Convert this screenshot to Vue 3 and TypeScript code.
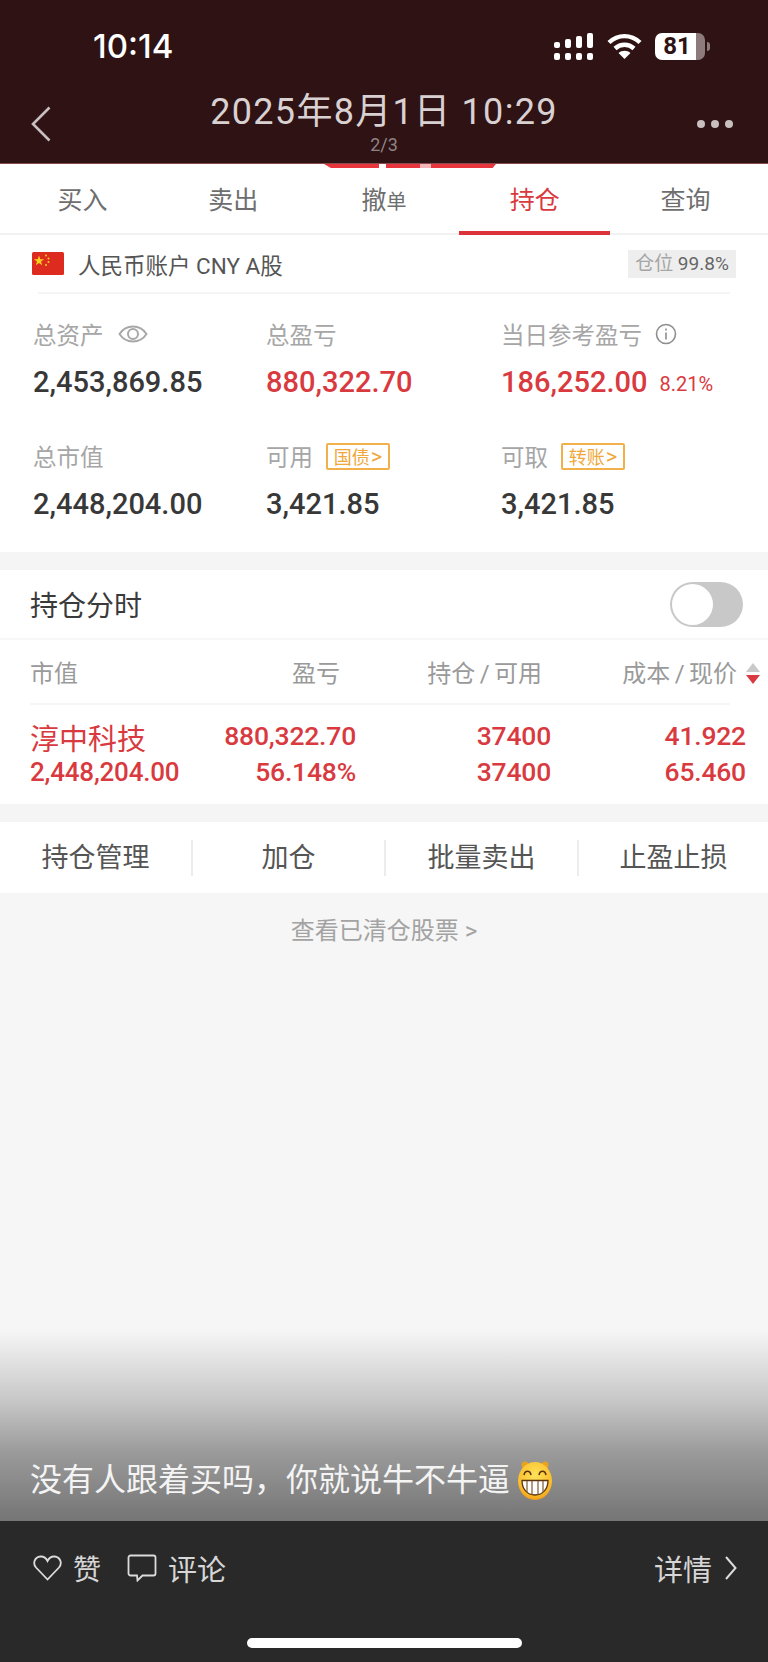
<script setup lang="ts">
import { ref } from 'vue'

const activeTab = ref('持仓')
const tabs = ['买入', '卖出', '撤单', '持仓', '查询']
const actions = ['持仓管理', '加仓', '批量卖出', '止盈止损']

const holding = {
  name: '淳中科技',
  marketValue: '2,448,204.00',
  profit: '880,322.70',
  profitRate: '56.148%',
  shares: '37400',
  available: '37400',
  cost: '41.922',
  price: '65.460',
}
</script>

<template>
  <div class="page">
    <header class="top">
      <div class="status">
        <span class="clock">10:14</span>
        <div class="status-icons">
          <svg class="signal" width="40" height="27" viewBox="0 0 40 27" fill="#fff">
            <rect x="0" y="9" width="6" height="6" rx="2" />
            <rect x="11" y="6" width="6" height="9" rx="2" />
            <rect x="22" y="3" width="6" height="12" rx="2" />
            <rect x="33" y="0" width="6" height="15" rx="2" />
            <rect x="0" y="20" width="6" height="7" rx="2" />
            <rect x="11" y="20" width="6" height="7" rx="2" />
            <rect x="22" y="20" width="6" height="7" rx="2" />
            <rect x="33" y="20" width="6" height="7" rx="2" />
          </svg>
          <svg class="wifi" width="35" height="26" viewBox="0 0 35 26" fill="none" stroke="#fff" stroke-width="4.4">
            <path d="M2 9.5C11 1 24 1 33 9.5" />
            <path d="M8 15.5C13.500 10.500 21.500 10.500 27 15.500" />
            <path d="M17.500 26L11.500 20C15 17 20 17 23.500 20Z" fill="#fff" stroke="none" />
          </svg>
          <div class="battery">
            <div class="battery-body"><span>81</span></div>
            <i class="battery-cap"></i>
          </div>
        </div>
      </div>
      <div class="nav">
        <svg class="back" width="20" height="36" viewBox="0 0 20 36" fill="none" stroke="#c9bfc0" stroke-width="2.6">
          <path d="M18.500 1.500L2 18L18.500 34.500" />
        </svg>
        <div class="nav-title">
          <div class="date">2025年8月1日 10:29</div>
          <div class="pager">2/3</div>
        </div>
        <div class="more"><i></i><i></i><i></i></div>
      </div>
    </header>

    <div class="peek"><div class="peek-bar"></div></div>

    <nav class="tabs">
      <div v-for="tab in tabs" :key="tab" class="tab" :class="{ active: tab === activeTab }">
        <template v-if="tab === '撤单'">撤<small>单</small></template>
        <template v-else>{{ tab }}</template>
      </div>
    </nav>

    <section class="account">
      <div class="account-row">
        <svg class="flag" width="32" height="23" viewBox="0 0 32 23">
          <rect width="32" height="23" rx="1.500" fill="#de2b20" />
          <polygon points="7,3.500 8.300,7.300 12.200,7.300 9,9.600 10.200,13.300 7,11 3.800,13.300 5,9.600 1.800,7.300 5.700,7.300" fill="#f6d21f" />
          <circle cx="14" cy="3.500" r="1" fill="#f6d21f" />
          <circle cx="16.500" cy="6.500" r="1" fill="#f6d21f" />
          <circle cx="16.500" cy="10" r="1" fill="#f6d21f" />
          <circle cx="14" cy="13" r="1" fill="#f6d21f" />
        </svg>
        <span class="account-name">人民币账户 CNY A股</span>
        <span class="ratio"><em>仓位</em> 99.8%</span>
      </div>

      <div class="stats">
        <div class="stat">
          <div class="stat-label">
            总资产
            <svg class="eye" width="30" height="22" viewBox="0 0 30 22" fill="none" stroke="#a8a8a8" stroke-width="2">
              <path d="M1.500 11C8 1 22 1 28.500 11C22 21 8 21 1.500 11Z" />
              <circle cx="15" cy="11" r="5" />
            </svg>
          </div>
          <div class="stat-value">2,453,869.85</div>
        </div>
        <div class="stat">
          <div class="stat-label">总盈亏</div>
          <div class="stat-value up">880,322.70</div>
        </div>
        <div class="stat">
          <div class="stat-label">
            当日参考盈亏
            <svg class="info" width="22" height="22" viewBox="0 0 22 22" fill="none" stroke="#8e8e8e" stroke-width="1.600">
              <circle cx="11" cy="11" r="9.500" />
              <path d="M11 9.500V16.500" />
              <path d="M11 5.500V7.500" />
            </svg>
          </div>
          <div class="stat-value up">186,252.00<span class="rate">8.21%</span></div>
        </div>
        <div class="stat">
          <div class="stat-label">总市值</div>
          <div class="stat-value">2,448,204.00</div>
        </div>
        <div class="stat">
          <div class="stat-label">可用<span class="link-tag">国债<b>&gt;</b></span></div>
          <div class="stat-value">3,421.85</div>
        </div>
        <div class="stat">
          <div class="stat-label">可取<span class="link-tag">转账<b>&gt;</b></span></div>
          <div class="stat-value">3,421.85</div>
        </div>
      </div>
    </section>

    <section class="positions">
      <div class="switch-row">
        <span>持仓分时</span>
        <div class="switch"><i></i></div>
      </div>
      <div class="table-head">
        <span class="col-a">市值</span>
        <span class="col-b">盈亏</span>
        <span class="col-c">持仓 / 可用</span>
        <span class="col-d">成本 / 现价</span>
        <div class="sort"><i class="sort-up"></i><i class="sort-down"></i></div>
      </div>
      <div class="table-row">
        <div class="col-a">
          <div class="stock-name">{{ holding.name }}</div>
          <div>{{ holding.marketValue }}</div>
        </div>
        <div class="col-b">
          <div>{{ holding.profit }}</div>
          <div>{{ holding.profitRate }}</div>
        </div>
        <div class="col-c">
          <div>{{ holding.shares }}</div>
          <div>{{ holding.available }}</div>
        </div>
        <div class="col-d">
          <div>{{ holding.cost }}</div>
          <div>{{ holding.price }}</div>
        </div>
      </div>
    </section>

    <section class="actions">
      <div v-for="item in actions" :key="item" class="action">{{ item }}</div>
    </section>

    <main class="rest">
      <div class="cleared">查看已清仓股票 &gt;</div>
      <div class="caption">
        <span>没有人跟着买吗，你就说牛不牛逼</span>
        <svg class="emoji" width="38" height="40" viewBox="0 0 38 40">
          <defs>
            <radialGradient id="face" cx="50%" cy="35%" r="70%">
              <stop offset="0%" stop-color="#ffe25a" />
              <stop offset="70%" stop-color="#fbc02d" />
              <stop offset="100%" stop-color="#ee9412" />
            </radialGradient>
          </defs>
          <circle cx="9" cy="5" r="3.500" fill="#e9a21c" />
          <circle cx="29" cy="5" r="3.500" fill="#e9a21c" />
          <ellipse cx="19" cy="21" rx="17" ry="19" fill="url(#face)" />
          <path d="M8 15C9 10 14 10 15 15M23 15C24 10 29 10 30 15" fill="none" stroke="#5b3410" stroke-width="1.600" />
          <path d="M6 20.500H32C32 29 27 35 19 35C11 35 6 29 6 20.500Z" fill="#fff" stroke="#5b3410" stroke-width="1.300" />
          <path d="M11 21V32M16 21V35M22 21V35M27 21V32" stroke="#7b5a30" stroke-width="1.200" />
        </svg>
      </div>
    </main>

    <footer class="bottom">
      <div class="bottom-row">
        <svg class="heart" width="29" height="26" viewBox="0 0 29 26" fill="none" stroke="#dcdcdc" stroke-width="1.800">
          <path d="M14.500 24.500L3 12.500C-0.500 8.500 1.500 2 7.500 1.500C10.500 1.300 13 3 14.500 6C16 3 18.500 1.300 21.500 1.500C27.500 2 29.500 8.500 26 12.500Z" />
        </svg>
        <span class="like">赞</span>
        <svg class="comment" width="30" height="28" viewBox="0 0 30 28" fill="none" stroke="#dcdcdc" stroke-width="1.800">
          <path d="M3.500 1.500H26.500C27.600 1.500 28.500 2.400 28.500 3.500V19.500C28.500 20.600 27.600 21.500 26.500 21.500H15.500L10.500 26.500L10 21.500H3.500C2.400 21.500 1.500 20.600 1.500 19.500V3.500C1.500 2.400 2.400 1.500 3.500 1.500Z" />
        </svg>
        <span>评论</span>
        <span class="detail">详情</span>
        <svg width="13" height="26" viewBox="0 0 13 26" fill="none" stroke="#dcdcdc" stroke-width="2">
          <path d="M2 2L11.500 13L2 24" />
        </svg>
      </div>
      <div class="home-bar"></div>
    </footer>
  </div>
</template>

<style>
html,
body {
  margin: 0;
  background: #f5f5f5;
}
</style>

<style scoped>
.page {
  width: 768px;
  height: 1662px;
  display: flex;
  flex-direction: column;
  overflow: hidden;
  background: #f5f5f5;
  font-family: Roboto, "Noto Sans CJK SC", sans-serif;
  color: #333;
}

/* 顶部深色区域 */
.top {
  height: 164px;
  flex: none;
  box-sizing: border-box;
  background: #2e1214;
  color: #fff;
  border-bottom: 1px solid #8a4a4c;
}

.status {
  height: 92px;
  display: flex;
  align-items: center;
  justify-content: space-between;
  padding: 0 58px 0 93px;
}

.clock {
  font-size: 33px;
  font-weight: 500;
  font-family: Inter, Roboto, sans-serif;
}

.status-icons {
  display: flex;
  align-items: center;
  gap: 13px;
}

.battery {
  display: flex;
  align-items: center;
  gap: 2px;
}

.battery-body {
  width: 50px;
  height: 27px;
  border-radius: 7px;
  overflow: hidden;
  background: linear-gradient(90deg, #fff 82%, #8d7a7b 82%);
  color: #2e1214;
  font-size: 24px;
  font-weight: 700;
  line-height: 27px;
  text-align: center;
  padding-right: 6px;
  box-sizing: border-box;
}

.battery-cap {
  width: 3px;
  height: 9px;
  border-radius: 0 3px 3px 0;
  background: #8d7a7b;
}

.nav {
  height: 71px;
  position: relative;
  display: flex;
  justify-content: center;
  align-items: flex-start;
}

.back {
  position: absolute;
  left: 31px;
  top: 14px;
}

.nav-title {
  text-align: center;
}

.date {
  font-size: 36px;
  line-height: 40px;
  letter-spacing: 1.3px;
  color: #d9d1d1;
}

.pager {
  font-size: 18px;
  line-height: 22px;
  margin-top: 2px;
  color: #8f8586;
}

.more {
  position: absolute;
  right: 35px;
  top: 28px;
  display: flex;
  gap: 6px;
}

.more i {
  width: 8px;
  height: 8px;
  border-radius: 50%;
  background: #c9bfc0;
}

/* 上一张页面露出的一点红条 */
.peek {
  height: 4px;
  flex: none;
  background: #fff;
  display: flex;
  justify-content: center;
}

.peek-bar {
  width: 172px;
  height: 4px;
  margin-left: 52px;
  background: linear-gradient(
    90deg,
    #e8343c 0,
    #e8343c 32%,
    #fff 32%,
    #fff 36%,
    #e8343c 36%,
    #e8343c 56%,
    #f5b5b8 56%,
    #f5b5b8 62%,
    #e8343c 62%
  );
  clip-path: polygon(0 0, 100% 0, 98% 100%, 4% 100%);
}

.tabs {
  height: 67px;
  flex: none;
  display: flex;
  padding: 0 7px;
  background: #fff;
  border-bottom: 2px solid #f1f1f1;
  box-sizing: border-box;
}

.tab {
  flex: 1;
  text-align: center;
  font-size: 25px;
  line-height: 65px;
  color: #6e6e6e;
  position: relative;
}

.tab small {
  font-size: 20px;
}

.tab.active {
  color: #d93a40;
}

.tab.active::after {
  content: '';
  position: absolute;
  left: 0;
  right: 0;
  bottom: -2px;
  height: 4px;
  background: #dc3239;
}

.account {
  flex: none;
  height: 317px;
  box-sizing: border-box;
  background: #fff;
}

.account-row {
  height: 59px;
  margin: 0 38px;
  display: flex;
  align-items: center;
  border-bottom: 2px solid #f5f5f5;
  box-sizing: border-box;
}

.flag {
  margin-left: -6px;
  margin-right: 14px;
}

.account-name {
  font-size: 22.5px;
  color: #555;
}

.ratio {
  margin-left: auto;
  margin-right: -6px;
  width: 108px;
  height: 28px;
  background: #eeeeee;
  font-size: 19px;
  line-height: 28px;
  color: #666;
  text-align: center;
}

.ratio em {
  font-style: normal;
  color: #a5a5a5;
}

.stats {
  display: grid;
  grid-template-columns: 233px 235px 1fr;
  grid-template-rows: 122px 122px;
  padding: 24px 0 0 33px;
}

.stat-label {
  height: 32px;
  display: flex;
  align-items: center;
  font-size: 23.5px;
  color: #a6a6a6;
  white-space: nowrap;
}

.eye {
  margin-left: 14px;
}

.info {
  margin-left: 13px;
}

.stat-value {
  margin-top: 14px;
  font-size: 29px;
  font-weight: 500;
  line-height: 36px;
  color: #383838;
  white-space: nowrap;
}

.stat-value.up {
  color: #d93a40;
}

.rate {
  font-size: 20px;
  margin-left: 12px;
  font-weight: 400;
  position: relative;
  top: -1px;
}

.link-tag {
  margin-left: 13px;
  height: 27px;
  width: 64px;
  box-sizing: border-box;
  border: 2px solid #f2b04a;
  border-radius: 2px;
  display: flex;
  align-items: center;
  justify-content: center;
  font-size: 18px;
  color: #f0a83a;
}

.link-tag b {
  font-weight: 400;
  font-size: 22px;
  margin-left: 1px;
}

.positions {
  margin-top: 18px;
  flex: none;
  height: 234px;
  background: #fff;
}

.switch-row {
  height: 70px;
  box-sizing: border-box;
  padding: 0 25px 0 30px;
  display: flex;
  align-items: center;
  justify-content: space-between;
  font-size: 28px;
  color: #3a3a3a;
  border-bottom: 2px solid #f8f8f8;
}

.switch {
  width: 73px;
  height: 45px;
  border-radius: 23px;
  background: #c8c8c8;
  position: relative;
}

.switch i {
  position: absolute;
  left: 2px;
  top: 2px;
  width: 41px;
  height: 41px;
  border-radius: 50%;
  background: #fff;
}

.table-head,
.table-row {
  display: grid;
  grid-template-columns: 180px 146px 195px 195px;
  margin-left: 30px;
  position: relative;
}

.table-head {
  height: 65px;
  width: 700px;
  align-items: center;
  font-size: 24px;
  word-spacing: -1.5px;
  color: #9a9a9a;
  border-bottom: 2px solid #f6f6f6;
  box-sizing: border-box;
  white-space: nowrap;
}

.table-head .col-b {
  padding-right: 16px;
}

.table-head .col-c,
.table-head .col-d {
  padding-right: 9px;
}

.col-b,
.col-c,
.col-d {
  text-align: right;
}

.sort {
  position: absolute;
  left: 716px;
  top: 23px;
  display: flex;
  flex-direction: column;
  gap: 3px;
}

.sort i {
  width: 0;
  height: 0;
  border-left: 7px solid transparent;
  border-right: 7px solid transparent;
}

.sort-up {
  border-bottom: 9px solid #c9c9c9;
}

.sort-down {
  border-top: 9px solid #d93a40;
}

.table-row {
  padding-top: 13px;
  font-size: 26.5px;
  font-weight: 500;
  line-height: 36px;
  color: #d93a40;
  letter-spacing: -0.2px;
  white-space: nowrap;
}

.table-row .col-a {
  font-size: 26px;
}

.stock-name {
  font-size: 29px;
  font-weight: 400;
  line-height: 44px;
  letter-spacing: 0;
  margin-bottom: -8px;
}

.actions {
  margin-top: 18px;
  flex: none;
  height: 71px;
  background: #fff;
  display: grid;
  grid-template-columns: 193px 193px 193px 189px;
  align-items: center;
}

.action {
  height: 36px;
  line-height: 36px;
  text-align: center;
  font-size: 27px;
  color: #555;
  border-right: 2px solid #ececec;
  box-sizing: border-box;
}

.action:last-child {
  border-right: 0;
}

.rest {
  flex: 1;
  display: flex;
  flex-direction: column;
  justify-content: space-between;
  min-height: 0;
  background: linear-gradient(180deg, #f6f6f6 0, #f6f6f6 437px, #c9c9c9 505px, #9a9a9a 560px, #757575 628px);
}

.cleared {
  margin-top: 22px;
  text-align: center;
  font-size: 24px;
  line-height: 32px;
  color: #a3a3a3;
}

.caption {
  height: 64px;
  box-sizing: border-box;
  padding: 0 0 0 30px;
  display: flex;
  align-items: flex-start;
  font-size: 32px;
  line-height: 46px;
  color: #f4f4f4;
  white-space: nowrap;
}

.emoji {
  margin: 3px 0 0 6px;
}

.bottom {
  flex: none;
  height: 141px;
  background: #2a2929;
  box-sizing: border-box;
  padding-top: 28px;
}

.bottom-row {
  display: flex;
  align-items: center;
  height: 38px;
  padding: 0 31px 0 33px;
  font-size: 29px;
  color: #d6d6d6;
}

.like {
  margin-left: 11px;
  font-size: 28px;
}

.comment {
  margin: 0 11px 0 26px;
}

.detail {
  margin-left: auto;
  margin-right: 12px;
}

.home-bar {
  width: 275px;
  height: 10px;
  border-radius: 5px;
  background: #fff;
  margin: 51px auto 0;
}
</style>
